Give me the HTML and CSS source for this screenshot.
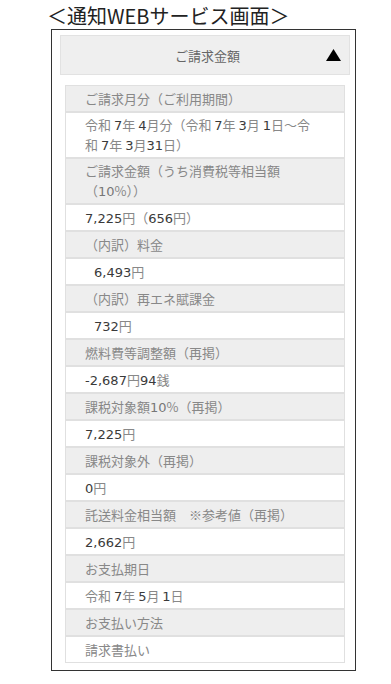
FILE: index.html
```html
<!DOCTYPE html>
<html lang="ja">
<head>
<meta charset="utf-8">
<title>通知WEBサービス画面</title>
<link rel="stylesheet" href="styles.css">
</head>
<body>
<h1 class="page-title">＜通知WEBサービス画面＞</h1>
<div class="frame">
  <div class="acc-head">
    <span class="acc-title">ご請求金額</span>
    <svg class="acc-icon" width="15" height="12" viewBox="0 0 15 12"><polygon points="7.5,0 15,12 0,12" fill="#000"/></svg>
  </div>
  <div class="list">
    <div class="row label">ご請求月分（ご利用期間）</div>
    <div class="row value multi">令和 <b>7</b>年 <b>4</b>月分（令和 <b>7</b>年 <b>3</b>月 <b>1</b>日〜令<br>和 <b>7</b>年 <b>3</b>月<b>31</b>日）</div>
    <div class="row label multi">ご請求金額（うち消費税等相当額<br>（<b>10</b>%））</div>
    <div class="row value"><b>7,225</b>円（<b>656</b>円）</div>
    <div class="row label">（内訳）料金</div>
    <div class="row value sub"><b>6,493</b>円</div>
    <div class="row label">（内訳）再エネ賦課金</div>
    <div class="row value sub"><b>732</b>円</div>
    <div class="row label">燃料費等調整額（再掲）</div>
    <div class="row value"><b>-2,687</b>円<b>94</b>銭</div>
    <div class="row label">課税対象額<b>10</b>%（再掲）</div>
    <div class="row value"><b>7,225</b>円</div>
    <div class="row label">課税対象外（再掲）</div>
    <div class="row value"><b>0</b>円</div>
    <div class="row label">託送料金相当額　※参考値（再掲）</div>
    <div class="row value"><b>2,662</b>円</div>
    <div class="row label">お支払期日</div>
    <div class="row value">令和 <b>7</b>年 <b>5</b>月 <b>1</b>日</div>
    <div class="row label">お支払い方法</div>
    <div class="row value">請求書払い</div>
  </div>
</div>
</body>
</html>
```
FILE: styles.css
```css
* { box-sizing: border-box; }
body {
  margin: 0;
  background: #fff;
  font-family: "Noto Sans CJK JP", "Noto Sans", sans-serif;
}
.page-title {
  margin: 0;
  padding: 3px 0 0 47px;
  height: 29px;
  font-size: 20px;
  font-weight: 400;
  line-height: 25px;
  color: #222;
}
.frame {
  margin-left: 51px;
  width: 305px;
  border: 1px solid #333;
  padding: 5px 5px 7px 8px;
}
.acc-head {
  height: 40px;
  background: #efefef;
  border: 1px solid #e2e2e2;
  display: flex;
  align-items: center;
  padding: 0 8px 0 28px;
}
.acc-title {
  flex: 1;
  text-align: center;
  font-size: 13px;
  color: #666;
}
.acc-icon { display: block; }
.list {
  margin: 10px 5px 0 5px;
  border: 1px solid #e0e0e0;
  background: #e0e0e0;
  display: flex;
  flex-direction: column;
  gap: 2px;
}
.row {
  font-size: 13px;
  line-height: 19px;
  padding: 3px 8px 3px 19px;
  color: #888;
  white-space: nowrap;
}
.row.multi {
  line-height: 20px;
  padding-top: 2px;
  padding-bottom: 2px;
}
.row.label { background: #eeeeee; }
.row.value { background: #fff; }
.row.sub { padding-left: 28px; }
.row b {
  font-family: "DejaVu Sans", sans-serif;
  font-weight: 400;
  font-size: 13px;
  line-height: 13px;
  color: #3a3a3a;
}
.row.label b { color: #777; }
```
